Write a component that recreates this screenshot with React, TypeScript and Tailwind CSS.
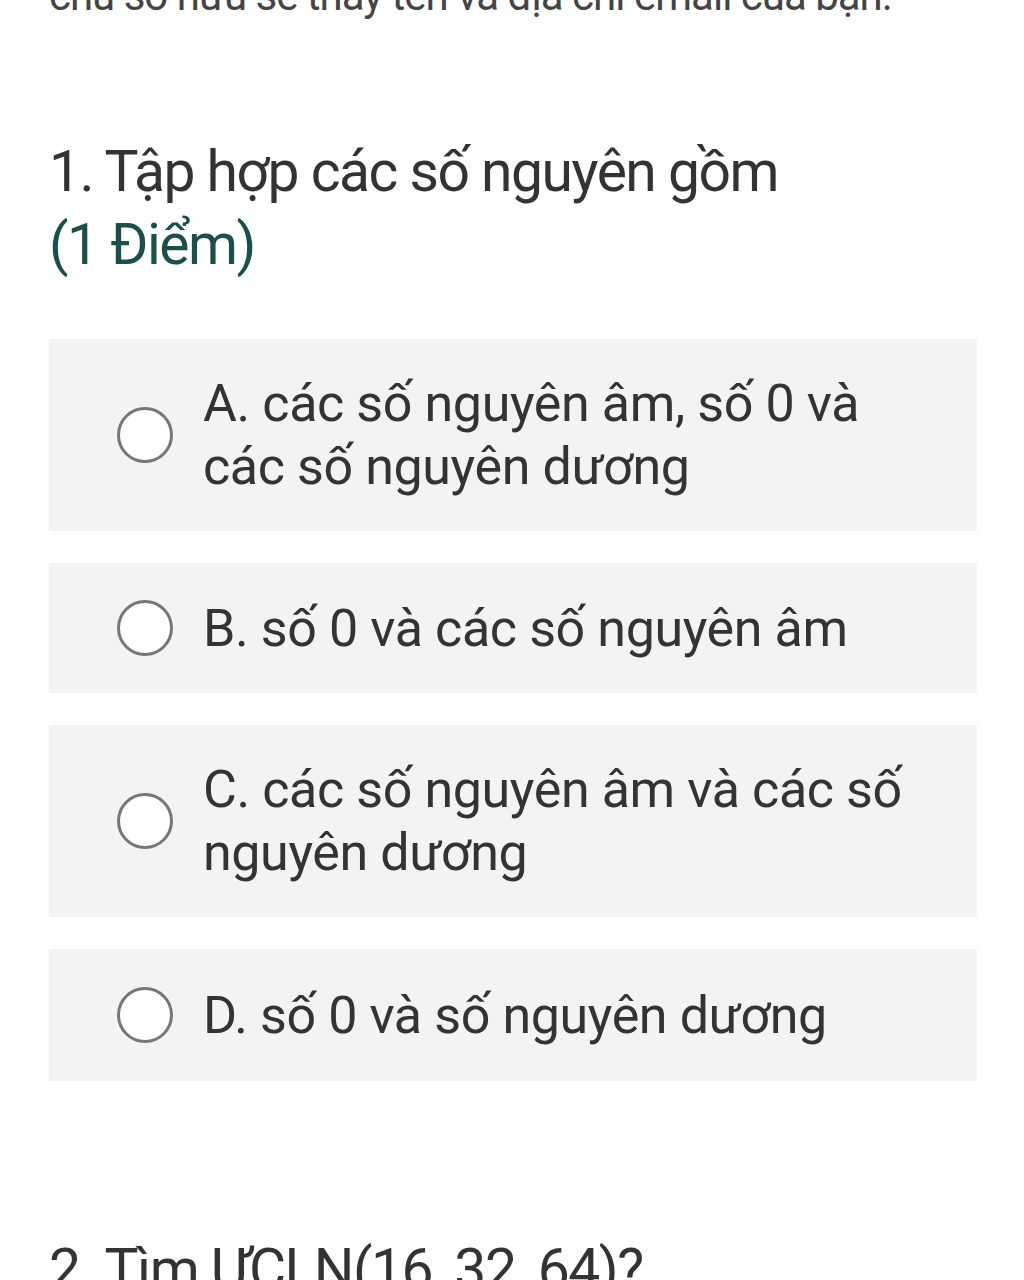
import React from "react";

const options = [
  { label: "A. các số nguyên âm, số 0 và các số nguyên dương", h: "h-[192px]" },
  { label: "B. số 0 và các số nguyên âm", h: "h-[130px]" },
  { label: "C. các số nguyên âm và các số nguyên dương", h: "h-[192px]" },
  { label: "D. số 0 và số nguyên dương", h: "h-[132px]" },
];

export default function App() {
  return (
    <div
      className="w-[1024px] h-[1280px] overflow-hidden bg-white text-[#333333]"
      style={{ fontFamily: "Roboto, 'Noto Sans', sans-serif" }}
    >
      <div className="pl-[49px] pr-[47px]">
        <div className="-mt-[28px] text-[42px] leading-[48px] tracking-[-1px] whitespace-nowrap text-[#444]">
          chủ sở hữu sẽ thấy tên và địa chỉ email của bạn.
        </div>
        <div className="mt-[115px] text-[57px] leading-[73px] tracking-[-1.5px]">
          <div>1. Tập hợp các số nguyên gồm</div>
          <div className="text-[#1c4f49]">(1 Điểm)</div>
        </div>
        <div className="mt-[58px] flex flex-col gap-[32px]">
          {options.map((o) => (
            <div
              key={o.label}
              className={`${o.h} bg-[#f3f3f3] flex items-center pl-[68px] pr-[60px]`}
            >
              <div className="w-[56px] h-[56px] shrink-0 rounded-full border-[3px] border-[#767676] bg-white" />
              <div className="ml-[30px] text-[52px] leading-[63px] tracking-[-0.4px]">{o.label}</div>
            </div>
          ))}
        </div>
        <div className="mt-[152px] text-[57px] leading-[73px] tracking-[-1.5px] whitespace-nowrap">
          2. Tìm ƯCLN(16, 32, 64)?
        </div>
      </div>
    </div>
  );
}
